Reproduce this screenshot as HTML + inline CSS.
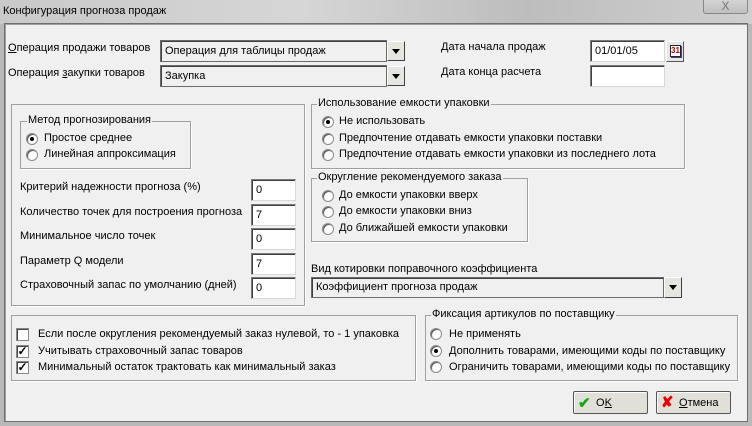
<!DOCTYPE html>
<html><head><meta charset="utf-8"><style>
*{box-sizing:border-box;margin:0;padding:0}
body{width:752px;height:426px;overflow:hidden;background:#b9b9b9;font-family:"Liberation Sans",sans-serif;font-size:11px;color:#000;position:relative}
.a{position:absolute;white-space:nowrap}
#title{left:0;top:0;width:752px;height:24px;background:linear-gradient(90deg,#c9c9c9,#d6d6d6 40%,#bdbdbd 70%,#cfcfcf)}
#client{left:4px;top:23px;width:744px;height:399px;background:#f0f0f0;border:1px solid #6e6e6e;box-shadow:inset 1px 1px 0 #a0a0a0}
.gb{position:absolute;border:1px solid #a0a0a0;box-shadow:1px 1px 0 #fff}
.gt{position:absolute;background:#f0f0f0;padding:0 1px;top:-8px;left:6px;white-space:nowrap}
.in{position:absolute;background:#fff;border:1px solid #7a7a7a;border-right-color:#d8d8d8;border-bottom-color:#d8d8d8;box-shadow:inset 1px 1px 0 #404040;padding:4px 0 0 4px}
.cb{position:absolute;background:#f0f0f0;border:1px solid #6a6a6a;box-shadow:inset 1px 1px 0 #404040;padding:4px 0 0 4px}
.btn{position:absolute;width:18px;height:20px;background:#e6e6e0;border:1px solid #fff;border-right-color:#404040;border-bottom-color:#404040}
.btn:after{content:"";position:absolute;left:4px;top:7px;border:4px solid transparent;border-top:5px solid #000;border-bottom:0}
.r{position:absolute;width:12px;height:12px;border-radius:50%;background:#fff;border:1px solid #8a8a8a;box-shadow:inset 1px 1px 0 #555}
.r.on:after{content:"";position:absolute;left:3px;top:3px;width:4px;height:4px;border-radius:50%;background:#000}
.c{position:absolute;width:13px;height:13px;background:#fff;border:1px solid #888;box-shadow:inset 1px 1px 0 #444;font-size:12px;line-height:11px;text-align:center;font-weight:bold}
.pb{position:absolute;height:23px;background:#e0dfd8;border:1px solid #555;border-radius:2px;box-shadow:inset 1px 1px 0 #fff}
</style></head><body>
<div id="title" class="a"></div>
<div class="a" style="left:3px;top:5px;font-size:11px">Конфигурация прогноза продаж</div>
<div class="a" style="left:703px;top:-4px;width:45px;height:18px;border:1px solid #888;border-radius:3px;background:linear-gradient(#d8d8d8,#c0c0c0);text-align:center;font-size:12px;color:#777;line-height:18px">X</div>
<div id="client" class="a"></div>

<div class="a" style="left:8px;top:42px"><u>О</u>перация продажи товаров</div>
<div class="cb" style="left:160px;top:40px;width:227px;height:22px">Операция для таблицы продаж</div>
<div class="btn" style="left:387px;top:41px"></div>
<div class="a" style="left:8px;top:67px">Операция <u>з</u>акупки товаров</div>
<div class="cb" style="left:160px;top:65px;width:227px;height:22px">Закупка</div>
<div class="btn" style="left:387px;top:66px"></div>

<div class="a" style="left:441px;top:41px"><u>Д</u>ата начала продаж</div>
<div class="in" style="left:590px;top:40px;width:75px;height:22px">01/01/05</div>
<div class="a" style="left:666px;top:41px;width:18px;height:21px;background:#e6e6e0;border:1px solid #fff;border-right-color:#555;border-bottom-color:#555"><div style="position:absolute;left:3px;top:3px;width:11px;height:12px;background:#fff;border:1px solid #224;box-shadow:1px 1px 0 #446;font-size:8px;color:#b00;font-weight:bold;line-height:10px;text-align:center">31</div></div>
<div class="a" style="left:441px;top:66px"><u>Д</u>ата конца расчета</div>
<div class="in" style="left:590px;top:65px;width:75px;height:22px"></div>

<div class="gb" style="left:11px;top:104px;width:294px;height:202px"></div>
<div class="gb" style="left:20px;top:121px;width:171px;height:48px"><span class="gt">Метод прогнозирования</span></div>
<div class="r on" style="left:26px;top:133px"></div><div class="a" style="left:44px;top:132px">Простое среднее</div>
<div class="r" style="left:26px;top:149px"></div><div class="a" style="left:44px;top:148px">Линейная аппроксимация</div>

<div class="a" style="left:20px;top:181px">Критерий надежности прогноза (%)</div>
<div class="in" style="left:251px;top:179px;width:45px;height:22px">0</div>
<div class="a" style="left:20px;top:206px">Количество точек для построения прогноза</div>
<div class="in" style="left:251px;top:204px;width:45px;height:22px">7</div>
<div class="a" style="left:20px;top:230px">Минимальное число точек</div>
<div class="in" style="left:251px;top:228px;width:45px;height:22px">0</div>
<div class="a" style="left:20px;top:255px">Параметр Q модели</div>
<div class="in" style="left:251px;top:253px;width:45px;height:22px">7</div>
<div class="a" style="left:20px;top:279px">Страховочный запас по умолчанию (дней)</div>
<div class="in" style="left:251px;top:277px;width:45px;height:22px">0</div>

<div class="gb" style="left:311px;top:104px;width:374px;height:65px"><span class="gt" style="left:5px">Использование емкости упаковки</span></div>
<div class="r on" style="left:322px;top:116px"></div><div class="a" style="left:339px;top:115px">Не использовать</div>
<div class="r" style="left:322px;top:133px"></div><div class="a" style="left:339px;top:132px">Предпочтение отдавать емкости упаковки поставки</div>
<div class="r" style="left:322px;top:149px"></div><div class="a" style="left:339px;top:148px">Предпочтение отдавать емкости упаковки из последнего лота</div>

<div class="gb" style="left:311px;top:178px;width:217px;height:64px"><span class="gt" style="left:5px">Округление рекомендуемого заказа</span></div>
<div class="r" style="left:322px;top:190px"></div><div class="a" style="left:339px;top:189px">До емкости упаковки вверх</div>
<div class="r" style="left:322px;top:206px"></div><div class="a" style="left:339px;top:205px">До емкости упаковки вниз</div>
<div class="r" style="left:322px;top:223px"></div><div class="a" style="left:339px;top:222px">До ближайшей емкости упаковки</div>

<div class="a" style="left:311px;top:263px">Вид котировки поправочного коэффициента</div>
<div class="cb" style="left:311px;top:277px;width:353px;height:21px;padding-top:3px">Коэффициент прогноза продаж</div>
<div class="btn" style="left:664px;top:277px;height:21px"></div>

<div class="gb" style="left:11px;top:315px;width:405px;height:66px"></div>
<div class="c" style="left:16px;top:328px"></div><div class="a" style="left:38px;top:328px">Если после округления рекомендуемый заказ нулевой, то - 1 упаковка</div>
<div class="c" style="left:16px;top:345px">✓</div><div class="a" style="left:38px;top:345px">Учитывать страховочный запас товаров</div>
<div class="c" style="left:16px;top:361px">✓</div><div class="a" style="left:38px;top:361px">Минимальный остаток трактовать как минимальный заказ</div>

<div class="gb" style="left:425px;top:315px;width:313px;height:66px"><span class="gt" style="left:5px">Фиксация артикулов по поставщику</span></div>
<div class="r" style="left:430px;top:328px"></div><div class="a" style="left:449px;top:328px">Не применять</div>
<div class="r on" style="left:430px;top:345px"></div><div class="a" style="left:449px;top:345px">Дополнить товарами, имеющими коды по поставщику</div>
<div class="r" style="left:430px;top:361px"></div><div class="a" style="left:449px;top:361px">Ограничить товарами, имеющими коды по поставщику</div>

<div class="pb" style="left:573px;top:391px;width:75px"><span class="a" style="left:4px;top:2px;color:#1a1;font-size:15px;font-weight:bold">✔</span><span class="a" style="left:22px;top:5px">O<u>K</u></span></div>
<div class="pb" style="left:656px;top:391px;width:75px"><span class="a" style="left:4px;top:1px;color:#e00;font-size:15px;font-weight:bold">✘</span><span class="a" style="left:22px;top:5px"><u>О</u>тмена</span></div>
</body></html>
